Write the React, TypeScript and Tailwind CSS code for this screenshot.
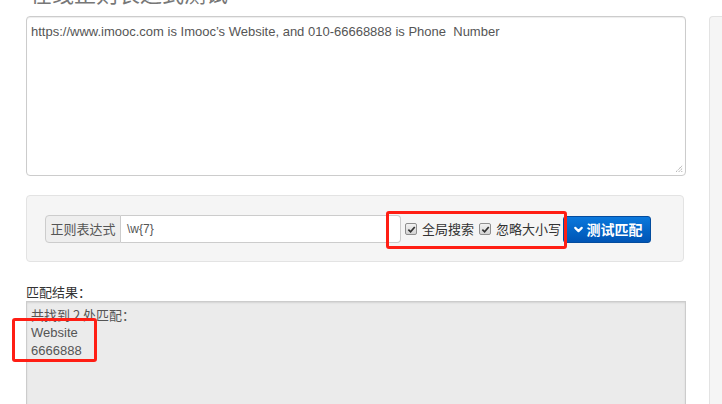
import { ChevronDown } from "lucide-react";

const cjk = "font-['Microsoft_YaHei','Noto_Sans_CJK_SC',sans-serif]";
const latin = "font-['Liberation_Sans','Noto_Sans_CJK_SC',sans-serif]";

function Check({ label }: { label: string }) {
  return (
    <label className="flex items-center gap-[5px]">
      <span className="flex h-[12px] w-[12px] items-center justify-center rounded-[2px] border border-[#8f8f8f] bg-gradient-to-b from-[#f2f2f2] to-[#d4d4d4]">
        <svg viewBox="0 0 10 10" className="h-[9px] w-[9px]">
          <path d="M1.5 5.2 L4 7.6 L8.6 2.2" fill="none" stroke="#333" strokeWidth="1.9" />
        </svg>
      </span>
      <span className={`${cjk} text-[13px] text-[#333]`}>{label}</span>
    </label>
  );
}

export default function App() {
  return (
    <div className={`relative h-[404px] w-[722px] overflow-hidden bg-white ${latin}`}>
      <div className="flex">
        {/* main column */}
        <div className="ml-[26px] w-[660px]">
          <div className="h-[16px] overflow-hidden">
            <h1 className={`${cjk} -mt-[22px] ml-[4px] text-[22px] leading-[28px] text-[#777]`}>
              在线正则表达式测试
            </h1>
          </div>

          <div className="relative h-[160px] rounded-[4px] border border-[#ccc] px-[4px] py-[5px] text-[13px] text-[#555] shadow-[inset_0_1px_1px_rgba(0,0,0,0.075)]">
            https://www.imooc.com is Imooc’s Website, and 010-66668888 is Phone&nbsp; Number
            <svg viewBox="0 0 10 10" className="absolute bottom-[2px] right-[2px] h-[9px] w-[9px]">
              <path d="M9 2 L2 9 M9 5 L5 9 M9 8 L8 9" stroke="#777" strokeWidth="1" strokeDasharray="1 1" />
            </svg>
          </div>

          <div className="mt-[19px] h-[67px] w-[658px] rounded-[4px] border border-[#e3e3e3] bg-[#f5f5f5] pl-[18px] pt-[19px]">
            <div className="flex items-center">
              <div className="flex h-[28px] w-[356px]">
                <span className={`${cjk} flex w-[76px] items-center justify-center rounded-l-[4px] border border-[#ccc] bg-[#eee] text-[13px] text-[#555]`}>
                  正则表达式
                </span>
                <span className="flex flex-1 items-center rounded-r-[4px] border border-l-0 border-[#ccc] bg-white pl-[6px] text-[12px] text-[#555]">
                  \w{"{7}"}
                </span>
              </div>
              <div className="ml-[4px] flex items-center gap-[5px]">
                <Check label="全局搜索" />
                <Check label="忽略大小写" />
              </div>
              <button className={`${cjk} ml-[2px] flex h-[27px] w-[88px] items-center justify-center gap-[2px] rounded-[3px] border border-[#034c9e] bg-gradient-to-b from-[#0b78dc] to-[#0055b5] text-[14px] font-bold text-white`}>
                <ChevronDown className="h-[13px] w-[13px]" strokeWidth={4} />
                测试匹配
              </button>
            </div>
          </div>

          <div className={`${cjk} mt-[21px] h-[18px] text-[13px] leading-[18px] text-[#333]`}>匹配结果：</div>
          <div className="h-[110px] overflow-hidden border border-[#ccc] bg-[#ebebeb] px-[4px] pt-[4px] text-[13px] leading-[18px] text-[#555] shadow-[inset_0_1px_2px_rgba(0,0,0,0.1)]">
            <div className={cjk}>共找到 2 处匹配：</div>
            <div>Website</div>
            <div>6666888</div>
          </div>
        </div>

        {/* right side panel */}
        <div className="ml-[23px] mt-[16px] h-[400px] flex-1 rounded-tl-[4px] border-l border-t border-[#e3e3e3] bg-[#f5f5f5]" />
      </div>

      {/* annotation boxes */}
      <div className="absolute left-[386px] top-[211px] h-[38px] w-[181px] rounded-[3px] border-[3px] border-[#ff1e14]" />
      <div className="absolute left-[12px] top-[318px] h-[44px] w-[85px] rounded-[3px] border-[3px] border-[#ff1e14]" />
    </div>
  );
}
